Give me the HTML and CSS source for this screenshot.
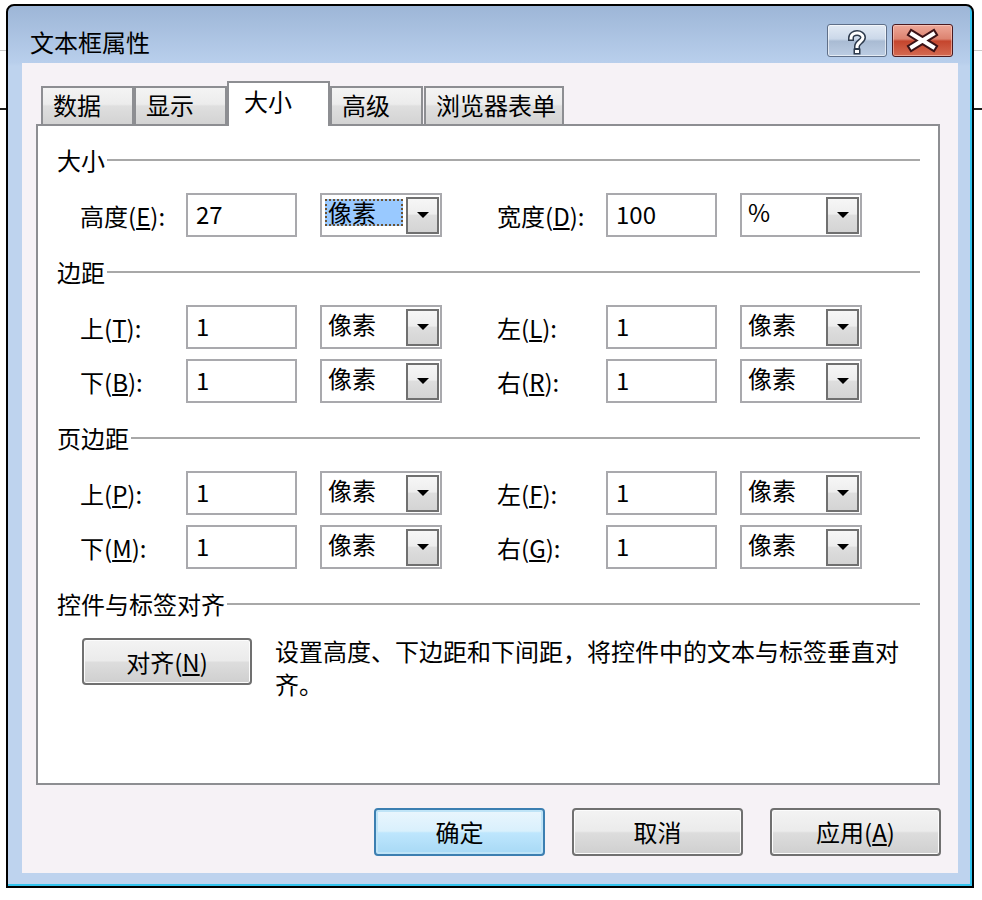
FILE: index.html
```html
<!DOCTYPE html>
<html>
    <head>
        <meta charset="utf-8">
        <title>文本框属性</title>
        <link rel="stylesheet" href="styles.css">
    </head>
    <body>
        <div class="window">
            <div class="titlebar">
                <span class="title">文本框属性</span>
                <div class="caption">
                    <span class="cap-btn help">
                        <svg width="58" height="31" viewBox="0 0 58 31">
                            <path d="M23 13 C23 6.5 35 6.5 35 12.5 C35 16.5 29 17 29 21.5" fill="none" stroke="#2d3a4c" stroke-width="6" stroke-linecap="square"/>
                            <rect x="25.5" y="23.5" width="7" height="6" fill="#2d3a4c"/>
                            <path d="M23 13 C23 6.5 35 6.5 35 12.5 C35 16.5 29 17 29 21.5" fill="none" stroke="#fff" stroke-width="3" stroke-linecap="square"/>
                            <rect x="27" y="25" width="4" height="3" fill="#fff"/>
                        </svg>
                    </span>
                    <span class="cap-btn close">
                        <svg width="59" height="31" viewBox="0 0 59 31">
                            <path d="M19 9 L40 22 M40 9 L19 22" stroke="#3b1216" stroke-width="8" stroke-linecap="square"/>
                            <path d="M19 9 L40 22 M40 9 L19 22" stroke="#fff" stroke-width="4" stroke-linecap="square"/>
                        </svg>
                    </span>
                </div>
            </div>

            <div class="client">
                <div class="tabs">
                    <span class="tab">数据</span>
                    <span class="tab">显示</span>
                    <span class="tab active">大小</span>
                    <span class="tab">高级</span>
                    <span class="tab">浏览器表单</span>
                </div>

                <div class="panel">
                    <!--大小-->
                    <div class="group">
                        <div class="group-title">大小</div>
                        <div class="rows">
                            <div class="row">
                                <span>高度(<u>E</u>):</span>
                                <span><span class="textbox">27</span></span>
                                <span><span class="combo"><span class="combo-text sel">像素</span><span class="drop"></span></span></span>
                                <span>宽度(<u>D</u>):</span>
                                <span><span class="textbox">100</span></span>
                                <span><span class="combo"><span class="combo-text">%</span><span class="drop"></span></span></span>
                            </div>
                        </div>
                    </div>

                    <!--边距-->
                    <div class="group">
                        <div class="group-title">边距</div>
                        <div class="rows">
                            <div class="row">
                                <span>上(<u>T</u>):</span>
                                <span><span class="textbox">1</span></span>
                                <span><span class="combo"><span class="combo-text">像素</span><span class="drop"></span></span></span>
                                <span>左(<u>L</u>):</span>
                                <span><span class="textbox">1</span></span>
                                <span><span class="combo"><span class="combo-text">像素</span><span class="drop"></span></span></span>
                            </div>
                            <div class="row">
                                <span>下(<u>B</u>):</span>
                                <span><span class="textbox">1</span></span>
                                <span><span class="combo"><span class="combo-text">像素</span><span class="drop"></span></span></span>
                                <span>右(<u>R</u>):</span>
                                <span><span class="textbox">1</span></span>
                                <span><span class="combo"><span class="combo-text">像素</span><span class="drop"></span></span></span>
                            </div>
                        </div>
                    </div>

                    <!--页边距-->
                    <div class="group">
                        <div class="group-title">页边距</div>
                        <div class="rows">
                            <div class="row">
                                <span>上(<u>P</u>):</span>
                                <span><span class="textbox">1</span></span>
                                <span><span class="combo"><span class="combo-text">像素</span><span class="drop"></span></span></span>
                                <span>左(<u>F</u>):</span>
                                <span><span class="textbox">1</span></span>
                                <span><span class="combo"><span class="combo-text">像素</span><span class="drop"></span></span></span>
                            </div>
                            <div class="row">
                                <span>下(<u>M</u>):</span>
                                <span><span class="textbox">1</span></span>
                                <span><span class="combo"><span class="combo-text">像素</span><span class="drop"></span></span></span>
                                <span>右(<u>G</u>):</span>
                                <span><span class="textbox">1</span></span>
                                <span><span class="combo"><span class="combo-text">像素</span><span class="drop"></span></span></span>
                            </div>
                        </div>
                    </div>

                    <!--控件与标签对齐-->
                    <div class="group">
                        <div class="group-title">控件与标签对齐</div>
                        <div class="align-row">
                            <span class="btn">对齐(<u>N</u>)</span>
                            <span class="align-text">设置高度、下边距和下间距，将控件中的文本与标签垂直对齐。</span>
                        </div>
                    </div>
                </div>

                <div class="footer">
                    <span class="btn default">确定</span>
                    <span class="btn">取消</span>
                    <span class="btn">应用(<u>A</u>)</span>
                </div>
            </div>
        </div>
    </body>
</html>
```

FILE: styles.css
```css
body{
    margin: 0;
    color: #000;
    font-family: "Noto Sans CJK SC", "Liberation Sans", sans-serif;
    font-size: 24px;
    background:
        linear-gradient(#c9c9c9, #c9c9c9) 0 50px / 100% 1px no-repeat,
        linear-gradient(#1e1e1e, #1e1e1e) 0 108px / 100% 2px no-repeat,
        #fff;
}

u{
    text-underline-offset: 2px;
}

.window{
    box-sizing: border-box;
    width: 968px;
    height: 884px;
    margin: 4px 0 0 6px;
    padding: 0 14px 13px 14px;
    border: 2px solid #000;
    border-radius: 8px 8px 0 0;
    background: linear-gradient(#9db6d7, #b9cfec 57px, #bed3ee 60px);
    box-shadow: inset -2px -2px 0 #33c4ee;
    display: flex;
    flex-direction: column;
}

/* title bar */
.titlebar{
    height: 57px;
    display: flex;
    justify-content: space-between;
    align-items: flex-start;
}

.title{
    margin: 21px 0 0 8px;
    line-height: 30px;
}

.caption{
    display: flex;
    gap: 5px;
    margin: 18px 5px 0 0;
}

.cap-btn{
    box-sizing: border-box;
    height: 33px;
    border: 1px solid #5f6f88;
    border-radius: 3px;
    display: flex;
}

.cap-btn.help{
    width: 60px;
    background: linear-gradient(#e2eaf4 0%, #cbd8e9 45%, #a9bbd3 52%, #bccde3 100%);
    box-shadow: inset 0 0 0 1px rgba(255,255,255,0.6);
}

.cap-btn.close{
    width: 61px;
    border-color: #4a1a20;
    background: linear-gradient(#eea899 0%, #dc8370 45%, #c5452d 52%, #d46a52 100%);
    box-shadow: inset 0 0 0 1px rgba(255,220,210,0.5);
}

/* dialog body */
.client{
    flex: 1;
    background: #f6f2f6;
    display: flex;
    flex-direction: column;
}

.tabs{
    display: flex;
    align-items: flex-end;
    height: 43px;
    margin: 18px 0 0 19px;
}

.tab{
    box-sizing: border-box;
    height: 38px;
    min-width: 93px;
    padding: 0 6px 0 10px;
    border: 2px solid #8d8e92;
    border-bottom: none;
    line-height: 34px;
    background: linear-gradient(#f4f4f4 0%, #ececec 45%, #dfdfdf 50%, #d3d3d3 100%);
}

.tab.active{
    height: 45px;
    min-width: 103px;
    padding-left: 15px;
    line-height: 36px;
    margin-bottom: -2px;
    background: #fff;
    position: relative;
    z-index: 1;
}

.tab:last-child{
    margin-left: 1px;
}

.panel{
    box-sizing: border-box;
    height: 661px;
    margin: 0 18px 0 14px;
    padding: 20px 18px 0 19px;
    border: 2px solid #8d8e92;
    background: #fff;
}

.group + .group{
    margin-top: 21px;
}

.group-title{
    display: flex;
    align-items: center;
    height: 28px;
    line-height: 28px;
}

.group-title::after{
    content: "";
    flex: 1;
    height: 2px;
    margin-left: 2px;
    background: #a8a8a8;
}

.rows{
    margin: 19px 0 0 23px;
    display: flex;
    flex-direction: column;
    gap: 10px;
}

.row{
    display: grid;
    grid-template-columns: 106px 134px 177px 109px 134px 122px;
    align-items: center;
    height: 44px;
}

.textbox{
    display: block;
    box-sizing: border-box;
    width: 111px;
    height: 44px;
    padding-left: 8px;
    border: 2px solid #a9a9ad;
    line-height: 38px;
}

.combo{
    box-sizing: border-box;
    width: 122px;
    height: 44px;
    padding: 0 1px 0 3px;
    border: 2px solid #a9a9ad;
    display: flex;
    align-items: center;
}

.combo-text{
    flex: 1;
    height: 27px;
    padding-left: 3px;
    line-height: 25px;
    align-self: flex-start;
    margin-top: 4px;
}

.combo-text.sel{
    margin-right: 3px;
    background: #99c9ff;
    outline: 2px dotted #6b5233;
    outline-offset: -2px;
}

.drop{
    box-sizing: border-box;
    width: 33px;
    height: 37px;
    margin-left: auto;
    border: 2px solid #707070;
    background: linear-gradient(#f6f6f6 0%, #eeeeee 45%, #dedede 50%, #d4d4d4 100%);
    display: flex;
    align-items: center;
    justify-content: center;
}

.drop::after{
    content: "";
    border-top: 6px solid #000;
    border-left: 6px solid transparent;
    border-right: 6px solid transparent;
}

.align-row{
    display: flex;
    align-items: flex-start;
    gap: 23px;
    margin: 20px 0 0 25px;
}

.align-text{
    width: 630px;
    line-height: 33px;
    margin-top: -4px;
}

/* buttons */
.btn{
    box-sizing: border-box;
    width: 170px;
    height: 47px;
    border: 2px solid #707070;
    border-radius: 4px;
    background: linear-gradient(#f3f3f3 0%, #ebebeb 48%, #dddddd 52%, #cfcfcf 100%);
    box-shadow: inset 0 0 0 1px #fcfcfc;
    display: flex;
    align-items: center;
    justify-content: center;
    line-height: 30px;
}

.footer{
    display: flex;
    justify-content: flex-end;
    gap: 27px;
    margin-top: 23px;
    padding-right: 17px;
}

.footer .btn{
    width: 171px;
    height: 48px;
}

.btn.default{
    border-color: #3c7fb1;
    background: linear-gradient(#eaf6fd 0%, #d9f0fc 48%, #bee6fd 52%, #a7d9f5 100%);
    box-shadow: inset 0 0 0 2px #bfe4f7;
}
```
